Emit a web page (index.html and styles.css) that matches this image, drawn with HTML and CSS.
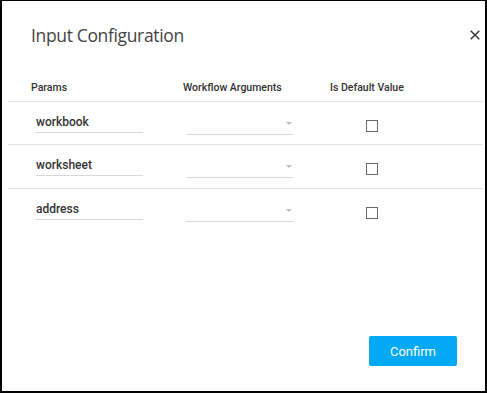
FILE: index.html
```html
<!DOCTYPE html>
<html>
<head>
<meta charset="utf-8">
<link rel="stylesheet" href="styles.css">
</head>
<body>
<div class="frame">
  <div class="title-bar">
    <h1 class="title">Input Configuration</h1>
    <button class="close" aria-label="Close">
      <svg width="10" height="10" viewBox="0 0 10 10"><path d="M0.7 0.7 L9.3 9.3 M9.3 0.7 L0.7 9.3" stroke="#333" stroke-width="1.4" fill="none"/></svg>
    </button>
  </div>
  <div class="table">
    <div class="row head">
      <div class="c1">Params</div>
      <div class="c2">Workflow Arguments</div>
      <div class="c3">Is Default Value</div>
    </div>
    <div class="row first">
      <div class="c1"><div class="input">workbook</div></div>
      <div class="c2"><div class="select"><span class="caret"></span></div></div>
      <div class="c3"><span class="check"></span></div>
    </div>
    <div class="row">
      <div class="c1"><div class="input">worksheet</div></div>
      <div class="c2"><div class="select"><span class="caret"></span></div></div>
      <div class="c3"><span class="check"></span></div>
    </div>
    <div class="row">
      <div class="c1"><div class="input">address</div></div>
      <div class="c2"><div class="select"><span class="caret"></span></div></div>
      <div class="c3"><span class="check"></span></div>
    </div>
  </div>
  <div class="footer">
    <button class="confirm">Confirm</button>
  </div>
</div>
</body>
</html>
```
FILE: styles.css
```css
html, body { margin: 0; padding: 0; background: #fff; }
.frame {
  width: 487px; height: 393px; box-sizing: border-box;
  border-style: solid; border-color: #000; border-width: 1px 2px 2px 2px;
  display: flex; flex-direction: column;
  font-family: Roboto, "Liberation Sans", sans-serif;
}
.title-bar {
  display: flex; align-items: flex-start; justify-content: space-between;
  padding: 22px 5px 0 29px; height: 50px; box-sizing: border-box;
}
.title {
  margin: 0; font-family: "Open Sans", "Noto Sans", sans-serif;
  font-weight: 400; font-size: 17.5px; line-height: 24px; color: #444;
  letter-spacing: -0.35px;
}
.close { border: 0; background: none; padding: 0; margin-top: 7px; width: 10px; height: 10px; display: block; }
.close svg { display: block; }
.table { margin: 30px 2px 0 6px; }
.row { display: grid; grid-template-columns: 175px 147px 1fr; height: 44px; box-sizing: border-box; border-top: 1px solid #e2e2e2; align-items: start; }
.row.head { height: auto; border-top: 0; border-bottom: 1px solid #e2e2e2; padding-bottom: 6px; }
.row.first { border-top: 0; height: 42px; }
.head div { font-size: 10.5px; font-weight: 500; color: #333; line-height: 14px; }
.head .c1 { padding-left: 23px; }
.input {
  margin: 11px 0 0 28px; width: 107px; height: 20px; box-sizing: border-box;
  border-bottom: 1px solid #d8d8d8; font-size: 12px; font-weight: 500; color: #333; line-height: 18px;
}
.select {
  margin: 13px 0 0 3px; width: 107px; height: 20px; box-sizing: border-box;
  border-bottom: 1px solid #d8d8d8; display: flex; justify-content: flex-end; align-items: flex-start;
}
.caret {
  width: 0; height: 0; margin: 7px 1px 0 0;
  border-left: 3px solid transparent; border-right: 3px solid transparent; border-top: 3px solid #bdbdbd;
}
.check {
  display: block; margin: 18px 0 0 36px; width: 12px; height: 12px; box-sizing: border-box;
  border: 1px solid #6b6b6b; background: #fff;
}
.footer { margin-top: auto; display: flex; justify-content: flex-end; padding: 0 28px 25px 0; }
.confirm {
  width: 88px; height: 30px; border: 0; border-radius: 2px; background: #03a9f4; color: #fff;
  font-family: Roboto, "Liberation Sans", sans-serif; font-size: 13px; padding: 0;
}
```
